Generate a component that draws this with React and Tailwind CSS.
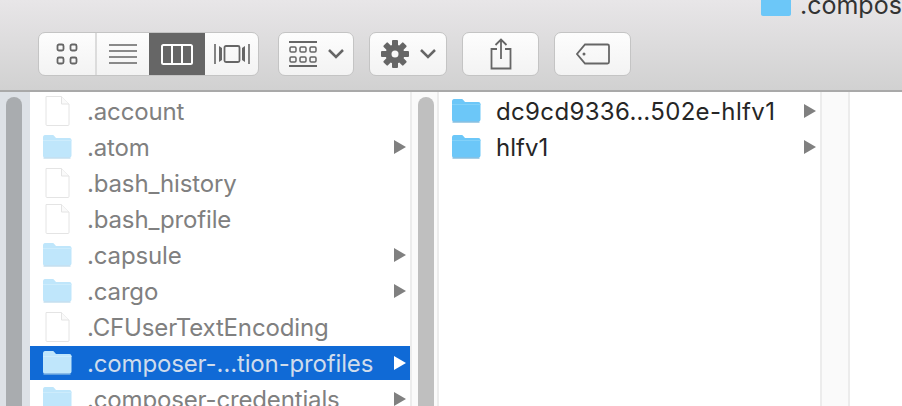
const font = { fontFamily: 'Inter, "Liberation Sans", sans-serif' };

const FolderIcon = ({ light }) => (
  <svg width="30" height="26" viewBox="0 0 30 26" className="shrink-0 -mt-[2px]">
    <path
      d="M1 4.500C1 3 1.800 2 3 2h7.500c.9 0 1.300.4 2 1.200L14 5h13.500C28.600 5 29.500 5.900 29.500 7v15.500c0 1.200-.8 2-2 2H2.500c-1 0-1.500-.8-1.500-2Z"
      fill={light ? '#bfe6fb' : '#6cc7f8'}
    />
    <path d="M1 7.500h28.500" stroke={light ? '#cdecfc' : '#82d1f9'} strokeWidth="1" />
    <path d="M1.500 25h27" stroke={light ? '#a8cfe6' : '#4e9fd0'} strokeWidth="1" />
  </svg>
);

const FileIcon = () => (
  <svg width="30" height="32" viewBox="0 0 30 32" className="shrink-0">
    <path d="M4 1.500h15.500L27 9v20.500c0 .6-.4 1-1 1H5c-.6 0-1-.4-1-1Z" fill="#fff" stroke="#e4e4e4" />
    <path d="M19.500 1.500V9H27" fill="#fafafa" stroke="#e4e4e4" />
  </svg>
);

const Arrow = ({ white }) => (
  <svg width="12" height="14" viewBox="0 0 12 14" className="shrink-0">
    <path d="M0 0l12 7-12 7Z" fill={white ? '#fff' : '#808080'} />
  </svg>
);

const Chevron = () => (
  <svg width="18" height="12" viewBox="0 0 18 12">
    <path d="M2 2l7 7 7-7" fill="none" stroke="#666" strokeWidth="2.500" />
  </svg>
);

const Row = ({ name, folder, selected, light, nameClass }) => (
  <div className={`flex h-[34px] mb-[2px] items-center ${selected ? 'bg-[#106ad6]' : ''}`}>
    <div className="w-[43px] flex justify-start shrink-0 pl-[12px]">
      {folder ? <FolderIcon light={light} /> : <FileIcon />}
    </div>
    <span className={`ml-[14px] pt-[1px] flex-1 text-[24px] whitespace-nowrap ${nameClass}`}>{name}</span>
    {folder && (
      <div className="mr-[4px]">
        <Arrow white={selected} />
      </div>
    )}
  </div>
);

const files = [
  { name: '.account' },
  { name: '.atom', folder: true },
  { name: '.bash_history' },
  { name: '.bash_profile' },
  { name: '.capsule', folder: true },
  { name: '.cargo', folder: true },
  { name: '.CFUserTextEncoding' },
  { name: '.composer-…tion-profiles', folder: true, selected: true },
  { name: '.composer-credentials', folder: true },
];

const ToolButton = ({ className = '', children }) => (
  <div className={`h-[44px] flex items-center justify-center gap-[10px] bg-gradient-to-b from-[#fdfdfd] to-[#f3f3f3] border border-[#c4c4c4] rounded-[7px] ${className}`}>
    {children}
  </div>
);

export default function App() {
  return (
    <div className="w-[902px] h-[406px] overflow-hidden flex flex-col bg-white" style={font}>
      {/* Toolbar */}
      <div className="h-[92px] shrink-0 bg-gradient-to-b from-[#e8e6e8] to-[#d1d1d1] border-b-2 border-[#a9a9a9] flex flex-col">
        <div className="h-[18px] overflow-hidden flex items-end pl-[761px] shrink-0">
          <div className="w-[30px] h-[30px] shrink-0 flex items-end mb-[2px]">
            <svg width="30" height="16" viewBox="0 0 30 16">
              <path d="M0 0h30v14c0 1-.8 2-2 2H2c-1.200 0-2-1-2-2Z" fill="#6cc7f8" />
            </svg>
          </div>
          <span className="ml-[9px] text-[25px] leading-[24px] text-[#333] whitespace-nowrap mb-[1px]">.composer-credentials</span>
        </div>
        <div className="flex items-start pl-[38px] mt-[14px]">
          <div className="flex h-[44px] w-[221px] rounded-[7px] border border-[#c4c4c4] overflow-hidden bg-gradient-to-b from-[#fdfdfd] to-[#f3f3f3]">
            <div className="w-[58px] border-r-2 border-[#dcdcdc] flex items-center justify-center">
              <svg width="22" height="22" viewBox="0 0 22 22" fill="none" stroke="#666" strokeWidth="1.800">
                <rect x="1.500" y="1.500" width="6" height="6" rx="1.500" />
                <rect x="14.500" y="1.500" width="6" height="6" rx="1.500" />
                <rect x="1.500" y="14.500" width="6" height="6" rx="1.500" />
                <rect x="14.500" y="14.500" width="6" height="6" rx="1.500" />
              </svg>
            </div>
            <div className="w-[52px] flex items-center justify-center">
              <svg width="28" height="22" viewBox="0 0 28 22" stroke="#666" strokeWidth="1.500">
                <path d="M0 2h28M0 8h28M0 14h28M0 20h28" />
              </svg>
            </div>
            <div className="w-[56px] bg-[#666] flex items-center justify-center">
              <svg width="32" height="21" viewBox="0 0 32 21" fill="none" stroke="#fff" strokeWidth="2">
                <rect x="1" y="1" width="30" height="19" rx="1.500" />
                <path d="M11 1v19M21 1v19" />
              </svg>
            </div>
            <div className="flex-1 flex items-center justify-center">
              <svg width="36" height="22" viewBox="0 0 36 22" fill="none" stroke="#666" strokeWidth="1.600">
                <path d="M1 1v20M35 1v20" />
                <rect x="10.500" y="3" width="15" height="16" rx="1.500" strokeWidth="1.800" />
                <path d="M5 3l3 2v12l-3 2ZM31 3l-3 2v12l3 2Z" fill="#666" stroke="none" />
              </svg>
            </div>
          </div>

          <ToolButton className="w-[76px] ml-[19px] pl-[2px]">
            <svg width="28" height="26" viewBox="0 0 28 26" fill="none" stroke="#666" strokeWidth="2">
              <path d="M0 1h28M0 25h28" strokeWidth="1.800" />
              <rect x="1" y="6" width="6" height="5" rx="1.200" strokeWidth="1.500" />
              <rect x="11" y="6" width="6" height="5" rx="1.200" strokeWidth="1.500" />
              <rect x="21" y="6" width="6" height="5" rx="1.200" strokeWidth="1.500" />
              <rect x="1" y="16" width="6" height="5" rx="1.200" strokeWidth="1.500" />
              <rect x="11" y="16" width="6" height="5" rx="1.200" strokeWidth="1.500" />
              <rect x="21" y="16" width="6" height="5" rx="1.200" strokeWidth="1.500" />
            </svg>
            <Chevron />
          </ToolButton>

          <ToolButton className="w-[78px] ml-[15px] pl-[2px]">
            <svg width="28" height="28" viewBox="0 0 28 28">
              <g fill="#666">
                <circle cx="14" cy="14" r="9.500" />
                <rect x="11" y="0" width="6" height="28" rx="1" />
                <rect x="11" y="0" width="6" height="28" rx="1" transform="rotate(45 14 14)" />
                <rect x="11" y="0" width="6" height="28" rx="1" transform="rotate(90 14 14)" />
                <rect x="11" y="0" width="6" height="28" rx="1" transform="rotate(135 14 14)" />
              </g>
              <circle cx="14" cy="14" r="3.500" fill="#f8f8f8" />
            </svg>
            <Chevron />
          </ToolButton>

          <ToolButton className="w-[77px] ml-[15px]">
            <svg width="22" height="32" viewBox="0 0 22 32" fill="none" stroke="#666" strokeWidth="1.800">
              <path d="M7 11H1.500v19.500h19V11H15" />
              <path d="M11 21V1.500M5.500 7L11 1.500 16.500 7" />
            </svg>
          </ToolButton>

          <ToolButton className="w-[77px] ml-[15px]">
            <svg width="34" height="22" viewBox="0 0 34 22" fill="none" stroke="#666" strokeWidth="1.800">
              <path d="M9 1.500h22.500c.8 0 1.500.7 1.500 1.500v16c0 .8-.7 1.500-1.500 1.500H9L1 11Z" />
              <circle cx="8" cy="11" r="1.500" fill="#666" stroke="none" />
            </svg>
          </ToolButton>
        </div>
      </div>

      {/* Columns */}
      <div className="flex-1 flex min-h-0 overflow-hidden">
        <div className="w-[30px] shrink-0 bg-[#dde1e6] pl-[6px] pt-[5px]">
          <div className="w-[16px] h-[400px] rounded-t-[8px] bg-[#a9acaf]" />
        </div>
        <div className="w-[380px] shrink-0 pt-[2px]">
          {files.map((f) => (
            <Row
              key={f.name}
              {...f}
              light
              nameClass={`tracking-[-0.15px] ${f.selected ? 'text-[#cfdcec]' : 'text-[#808080]'}`}
            />
          ))}
        </div>
        <div className="w-[29px] shrink-0 bg-[#fafafa] border-x-2 border-[#ececec] pl-[6px] pt-[5px]">
          <div className="w-[16px] h-[400px] rounded-t-[8px] bg-[#bfbfbf]" />
        </div>
        <div className="w-[381px] shrink-0 pt-[2px]">
          <Row name="dc9cd9336…502e-hlfv1" folder nameClass="text-[#262626] tracking-[0.35px]" />
          <Row name="hlfv1" folder nameClass="text-[#262626]" />
        </div>
        <div className="w-[30px] shrink-0 bg-[#fafafa] border-x-2 border-[#ececec]" />
        <div className="flex-1 bg-white" />
      </div>
    </div>
  );
}
